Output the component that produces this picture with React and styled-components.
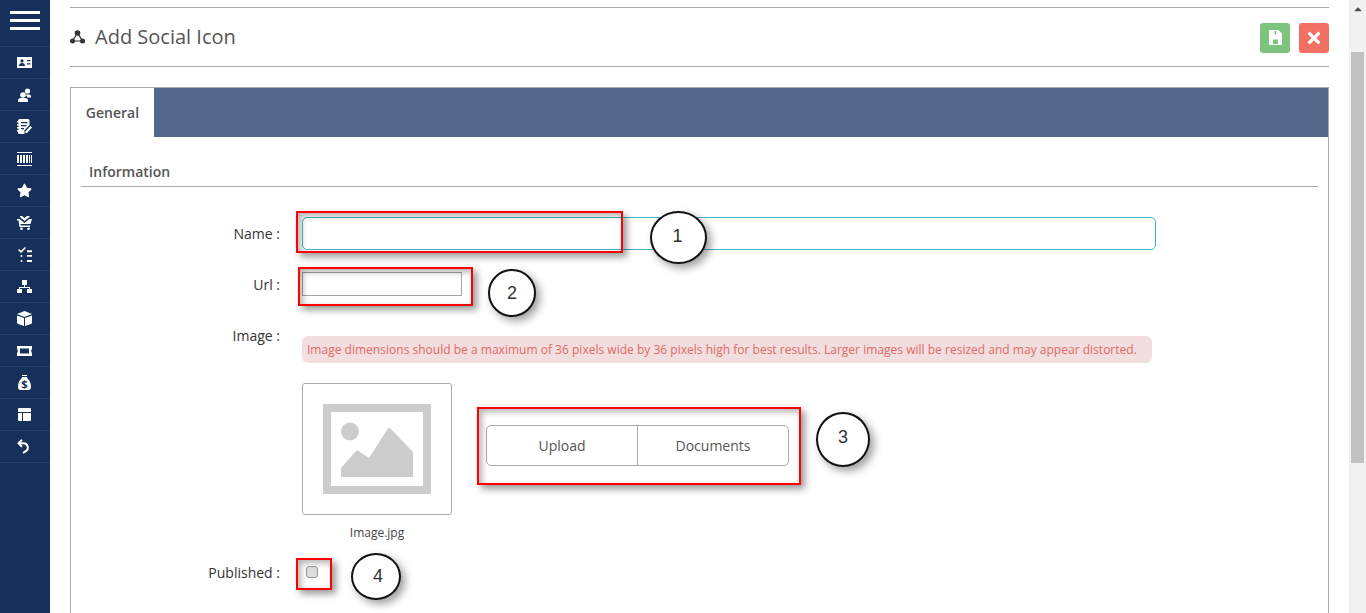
import React from "react";
import styled, { createGlobalStyle } from "styled-components";
import { FaStar, FaTimes, FaCaretUp } from "react-icons/fa";

const GlobalStyle = createGlobalStyle`
  html, body {
    margin: 0;
    height: 100%;
    overflow: hidden;
    background: #fff;
    font-family: "Open Sans", "Liberation Sans", sans-serif;
  }
  * {
    box-sizing: border-box;
  }
`;

const Page = styled.div`
  position: relative;
  display: flex;
  height: 613px;
  overflow: hidden;
`;

const Sidebar = styled.nav`
  flex: 0 0 50px;
  background: #15305b;
`;

const Burger = styled.div`
  height: 47px;
  padding: 11px 10px 0;
  border-bottom: 1px solid #263f69;
  display: flex;
  flex-direction: column;
  gap: 5px;

  span {
    display: block;
    height: 3px;
    background: #fff;
  }
`;

const NavItem = styled.a`
  height: 32px;
  padding-right: 1px;
  display: flex;
  align-items: center;
  justify-content: center;
  border-bottom: 1px solid #263f69;
  color: #fff;

  svg {
    display: block;
  }
`;

const Main = styled.main`
  flex: 1;
  min-width: 0;
  padding: 0 20px;
`;

const TopRule = styled.div`
  height: 8px;
  border-bottom: 1px solid #aaa;
`;

const Header = styled.header`
  height: 59px;
  display: flex;
  align-items: center;
  justify-content: space-between;
  border-bottom: 1px solid #aaa;
`;

const Title = styled.h1`
  margin: 0;
  display: flex;
  align-items: center;
  gap: 10px;
  font-size: 20px;
  font-weight: 400;
  line-height: 27px;
  color: #555;
  padding-bottom: 1px;

  svg {
    color: #333;
  }
`;

const Actions = styled.div`
  display: flex;
  gap: 9px;
  padding-top: 1px;
`;

const ActionButton = styled.button`
  width: 30px;
  height: 30px;
  padding: 0;
  border: 0;
  border-radius: 3px;
  display: flex;
  align-items: center;
  justify-content: center;
  color: #fff;
  font-size: 18px;
  background: ${(p) => (p.$danger ? "#f27063" : "#7dc47e")};
`;

const Panel = styled.section`
  margin-top: 20px;
  height: 600px;
  border: 1px solid #aaa;
`;

const TabBar = styled.div`
  height: 49px;
  background: #54688c;
`;

const Tab = styled.div`
  width: 83px;
  height: 49px;
  background: #fff;
  display: flex;
  align-items: center;
  justify-content: center;
  font-size: 14px;
  font-weight: 600;
  color: #555;
`;

const Body = styled.div`
  padding: 0 10px;
`;

const SectionTitle = styled.h2`
  margin: 0;
  height: 50px;
  padding: 25px 8px 0;
  border-bottom: 1px solid #aaa;
  font-size: 14px;
  line-height: 19px;
  font-weight: 600;
  color: #555;
`;

const Row = styled.div`
  display: flex;
  align-items: ${(p) => (p.$top ? "flex-start" : "center")};
  gap: 22px;
  margin-top: ${(p) => p.$gap}px;
`;

const Label = styled.label`
  flex: 0 0 199px;
  text-align: right;
  font-size: 14px;
  line-height: 19px;
  color: #333;
`;

const NameInput = styled.input`
  display: block;
  width: 854px;
  height: 33px;
  border: 1px solid #3fb6c4;
  border-radius: 5px;
  background: #fff;
  outline: 0;
`;

const UrlInput = styled.input`
  display: block;
  width: 160px;
  height: 24px;
  border: 1px solid #a5a5a5;
  background: #fff;
  outline: 0;
`;

const Field = styled.div`
  flex: 1;
  min-width: 0;
`;

const Notice = styled.div`
  width: 850px;
  height: 27px;
  margin-top: 10px;
  padding: 0 5px;
  border-radius: 6px;
  background: #f2dede;
  color: #e06a66;
  font-size: 12px;
  letter-spacing: 0.015px;
  line-height: 27px;
  white-space: nowrap;
`;

const ImageRow = styled.div`
  display: flex;
  align-items: flex-start;
  gap: 34px;
  margin-top: 20px;
`;

const ImageBox = styled.div`
  width: 150px;
  height: 132px;
  border: 1px solid #aaa;
  border-radius: 3px;
  display: flex;
  align-items: center;
  justify-content: center;
`;

const ButtonGroup = styled.div`
  display: flex;
  width: 303px;
  height: 41px;
  margin-top: 42px;
  border: 1px solid #aaa;
  border-radius: 5px;
`;

const GroupButton = styled.button`
  flex: 0 0 ${(p) => p.$width}px;
  padding: 0;
  border: 0;
  border-left: ${(p) => (p.$divider ? "1px solid #aaa" : "0")};
  background: transparent;
  font-family: inherit;
  font-size: 14px;
  color: #555;
`;

const Caption = styled.div`
  width: 150px;
  margin-top: 10px;
  text-align: center;
  font-size: 12px;
  line-height: 16px;
  color: #444;
`;

const Checkbox = styled.input.attrs({ type: "checkbox" })`
  appearance: none;
  display: block;
  width: 12px;
  height: 12px;
  margin: 0 0 2px 4px;
  border: 1px solid #999;
  border-radius: 3px;
  background: #ddd;
`;

const Scrollbar = styled.div`
  flex: 0 0 17px;
  background: #f1f1f1;
  display: flex;
  flex-direction: column;
  align-items: center;
`;

const ScrollArrow = styled.div`
  height: 17px;
  display: flex;
  align-items: center;
  color: #505050;
  font-size: 12px;
`;

const ScrollThumb = styled.div`
  width: 13px;
  height: 411px;
  margin-top: 35px;
  background: #c1c1c1;
`;

/* screenshot annotations, they lie over the form */
const Marker = styled.div`
  position: absolute;
  left: ${(p) => p.$x}px;
  top: ${(p) => p.$y}px;
  width: ${(p) => p.$w}px;
  height: ${(p) => p.$h}px;
  border: 2px solid #f00;
  box-shadow: 4px 4px 7px rgba(0, 0, 0, 0.4), inset 3px 3px 6px rgba(0, 0, 0, 0.3);
`;

const Callout = styled.div`
  position: absolute;
  left: ${(p) => p.$x}px;
  top: ${(p) => p.$y}px;
  width: ${(p) => p.$w}px;
  height: ${(p) => p.$h}px;
  padding: 0 ${(p) => p.$right}px ${(p) => p.$lift}px ${(p) => p.$left}px;
  border: 2px solid #111;
  border-radius: 50%;
  background: #fff;
  box-shadow: 4px 4px 8px rgba(0, 0, 0, 0.38);
  display: flex;
  align-items: center;
  justify-content: center;
  font-family: "Liberation Sans", Arial, sans-serif;
  font-size: 18px;
  color: #333;
`;

const NodesIcon = () => (
  <svg width="15" height="14" viewBox="0 0 15 14" fill="#333">
    <path d="M7.500 3 2.500 11h10Z" fill="none" stroke="#333" strokeWidth="1.200" />
    <circle cx="7.500" cy="3" r="2.800" />
    <circle cx="2.500" cy="11" r="2.500" />
    <circle cx="12.500" cy="11" r="2.500" />
  </svg>
);

const CardIcon = () => (
  <svg width="15" height="11" viewBox="0 0 15 11" fill="currentColor">
    <path
      fillRule="evenodd"
      d="M0 0h15v11H0ZM5 2.300a1.600 1.600 0 1 0 0 3.200 1.600 1.600 0 0 0 0-3.200ZM2 9h6c0-1.800-1.200-3-3-3S2 7.200 2 9ZM10 3v1.300h3.500V3ZM10 6.300v1.300h3.500V6.300Z"
    />
  </svg>
);

const UsersIcon = () => (
  <svg width="13" height="14" viewBox="0 0 13 14" fill="currentColor">
    <circle cx="9.500" cy="3" r="2.600" />
    <path d="M8.500 6.500h2.500c1.300 0 2 .8 2 2.300v.7H9.500C9.300 8.500 8.800 7.500 7.500 7Z" />
    <circle cx="5" cy="7" r="2.800" />
    <path d="M0 14v-1.500C0 11 1.200 10 2.500 10h5C8.800 10 10 11 10 12.500V14Z" />
  </svg>
);

const NoteIcon = () => (
  <svg width="15" height="15" viewBox="0 0 15 15" fill="currentColor">
    <path d="M2 0h9a1.500 1.500 0 0 1 1.500 1.500V6L7.500 11.500V15H2.500A1.500 1.500 0 0 1 1 13.500V12.500H0V11h1.500v-1.500H0V8h1.500V6.500H0V5h1.500V3.500H0V2h1Z" />
    <path d="M13.500 7 15 8.500 10 14H8.500v-1.500Z" />
    <path d="M4 3h6.500v1.200H4ZM4 6h5.500v1.200H4ZM4 9h3v1.200H4Z" fill="#15305b" />
  </svg>
);

const BarcodeIcon = () => (
  <svg width="15" height="14" viewBox="0 0 15 14" fill="currentColor">
    <path d="M0 0h15v1H0ZM0 13h15v1H0ZM0 3h2v8H0ZM3 3h2v8H3ZM6 3h2v8H6ZM9 3h2v8H9ZM12 3h1v8h-1ZM14 3h1v8h-1Z" />
  </svg>
);

const CartIcon = () => (
  <svg width="15" height="14" viewBox="0 0 15 14" fill="currentColor">
    <path d="M3 0h2l2.500 2L10 0h2.500v1L7.500 5 3 1Z" />
    <path d="M0 3h2.500L7.500 7l5-4H15l-1.500 5H3.500l.3 1.500H13V11H2.500L1.500 4.500H0Z" />
    <circle cx="4.500" cy="12.700" r="1.300" />
    <circle cx="11.500" cy="12.700" r="1.300" />
  </svg>
);

const TasksIcon = () => (
  <svg width="14" height="15" viewBox="0 0 14 15" fill="currentColor">
    <path d="M0 3 1 2l2 1.800L7 0l1 1-5 5Z" />
    <path d="M9 3.300h5v2H9ZM9 8h5v1.800H9ZM9 13h5v2H9Z" />
    <circle cx="3.500" cy="9" r="1" />
    <circle cx="3.500" cy="14" r="1" />
  </svg>
);

const SitemapIcon = () => (
  <svg width="15" height="13" viewBox="0 0 15 13" fill="currentColor">
    <path d="M5 0h5v5H5ZM0 9h5v4H0ZM10 9h5v4h-5Z" />
    <path d="M7 5h1v2h5v2h-1V8H3v1H2V7h5Z" />
  </svg>
);

const BoxIcon = () => (
  <svg width="15" height="15" viewBox="0 0 15 15" fill="currentColor">
    <path d="M7.500 0 15 3 7.500 6 0 3Z" />
    <path d="M0 4.500 7 7v8l-6-2-1-1ZM15 4.500 8 7v8l6-2 1-1Z" />
  </svg>
);

const TicketIcon = () => (
  <svg width="15" height="10" viewBox="0 0 15 10" fill="currentColor">
    <path
      fillRule="evenodd"
      d="M0 0h15v3.500h-.7v3h.7V10H0V6.500h.7v-3H0ZM3 2.500v5h9v-5Z"
    />
  </svg>
);

const SackIcon = () => (
  <svg width="13" height="15" viewBox="0 0 13 15">
    <path fill="#fff" d="M4 0h5v1H4ZM4 2h5l.5 1.500C12 5.500 13 8.500 13 12c0 2-1 3-2.500 3h-8C1 15 0 14 0 12c0-3.500 1-6.500 3.500-8.500Z" />
    <text x="6.500" y="12.800" textAnchor="middle" fontSize="11" fontWeight="700" fontFamily="Open Sans, sans-serif" fill="#15305b">$</text>
  </svg>
);

const LayoutIcon = () => (
  <svg width="13" height="13" viewBox="0 0 13 13" fill="currentColor">
    <path d="M1 0h11a1 1 0 0 1 1 1v3H0V1a1 1 0 0 1 1-1ZM0 5h4v8H1a1 1 0 0 1-1-1ZM5 5h8v7a1 1 0 0 1-1 1H5Z" />
  </svg>
);

const BackIcon = () => (
  <svg width="12" height="15" viewBox="0 0 12 15" fill="none" stroke="currentColor" strokeWidth="2" style={{ marginRight: 3 }}>
    <path d="M5 .7 1.500 4.300 5 7.800" />
    <path d="M2 4.300h4.500a4.300 4.300 0 0 1 1.800 8.200L6 14" />
  </svg>
);

const SaveIcon = () => (
  <svg width="13" height="15" viewBox="0 0 13 15" fill="currentColor">
    <path
      fillRule="evenodd"
      d="M1 0h8.500L13 3.500V14a1 1 0 0 1-1 1H1a1 1 0 0 1-1-1V1a1 1 0 0 1 1-1ZM5.500 1v3.500h1.500V1ZM4 9.500V14h5V9.500Z"
    />
  </svg>
);

const Placeholder = () => (
  <svg width="108" height="90" viewBox="0 0 108 90">
    <path fill="#ccc" fillRule="evenodd" d="M0 0h108v90H0ZM8 8v74h92V8Z" />
    <circle cx="27" cy="27.500" r="9" fill="#ccc" />
    <path fill="#ccc" d="M18 73V64L34 46l12 8 20-31 24 25v25Z" />
  </svg>
);

const navIcons = [
  <CardIcon key="a" />,
  <UsersIcon key="b" />,
  <NoteIcon key="c" />,
  <BarcodeIcon key="d" />,
  <FaStar key="e" size={15} />,
  <CartIcon key="f" />,
  <TasksIcon key="g" />,
  <SitemapIcon key="h" />,
  <BoxIcon key="i" />,
  <TicketIcon key="j" />,
  <SackIcon key="k" />,
  <LayoutIcon key="l" />,
  <BackIcon key="m" />,
];

const markers = [
  { x: 296, y: 211, w: 327, h: 42 },
  { x: 298, y: 267, w: 175, h: 39 },
  { x: 477, y: 407, w: 324, h: 78 },
  { x: 296, y: 558, w: 36, h: 32 },
];

const callouts = [
  { x: 650, y: 211, w: 57, h: 53, n: 1, lift: 2, left: 0, right: 2 },
  { x: 488, y: 269, w: 48, h: 48, n: 2, lift: 0, left: 0, right: 0 },
  { x: 816, y: 412, w: 54, h: 55, n: 3, lift: 4, left: 0, right: 0 },
  { x: 351, y: 553, w: 50, h: 47, n: 4, lift: 0, left: 4, right: 0 },
];

export default function App() {
  return (
    <>
      <GlobalStyle />
      <Page>
        <Sidebar>
          <Burger>
            <span />
            <span />
            <span />
          </Burger>
          {navIcons.map((icon) => (
            <NavItem key={icon.key}>{icon}</NavItem>
          ))}
        </Sidebar>

        <Main>
          <TopRule />
          <Header>
            <Title>
              <NodesIcon />
              Add Social Icon
            </Title>
            <Actions>
              <ActionButton>
                <SaveIcon />
              </ActionButton>
              <ActionButton $danger>
                <FaTimes />
              </ActionButton>
            </Actions>
          </Header>

          <Panel>
            <TabBar>
              <Tab>General</Tab>
            </TabBar>
            <Body>
              <SectionTitle>Information</SectionTitle>
              <Row $gap={30}>
                <Label>Name :</Label>
                <NameInput />
              </Row>
              <Row $gap={22}>
                <Label>Url :</Label>
                <UrlInput />
              </Row>
              <Row $gap={30} $top>
                <Label>Image :</Label>
                <Field>
                  <Notice>
                    Image dimensions should be a maximum of 36 pixels wide by 36 pixels high for best
                    results. Larger images will be resized and may appear distorted.
                  </Notice>
                  <ImageRow>
                    <ImageBox>
                      <Placeholder />
                    </ImageBox>
                    <ButtonGroup>
                      <GroupButton $width={150}>Upload</GroupButton>
                      <GroupButton $width={151} $divider>
                        Documents
                      </GroupButton>
                    </ButtonGroup>
                  </ImageRow>
                  <Caption>Image.jpg</Caption>
                </Field>
              </Row>
              <Row $gap={22}>
                <Label>Published :</Label>
                <Checkbox />
              </Row>
            </Body>
          </Panel>
        </Main>

        <Scrollbar>
          <ScrollArrow>
            <FaCaretUp />
          </ScrollArrow>
          <ScrollThumb />
        </Scrollbar>

        {markers.map((m) => (
          <Marker key={m.x + m.y} $x={m.x} $y={m.y} $w={m.w} $h={m.h} />
        ))}
        {callouts.map((c) => (
          <Callout key={c.n} $x={c.x} $y={c.y} $w={c.w} $h={c.h} $lift={c.lift} $left={c.left} $right={c.right}>
            {c.n}
          </Callout>
        ))}
      </Page>
    </>
  );
}
